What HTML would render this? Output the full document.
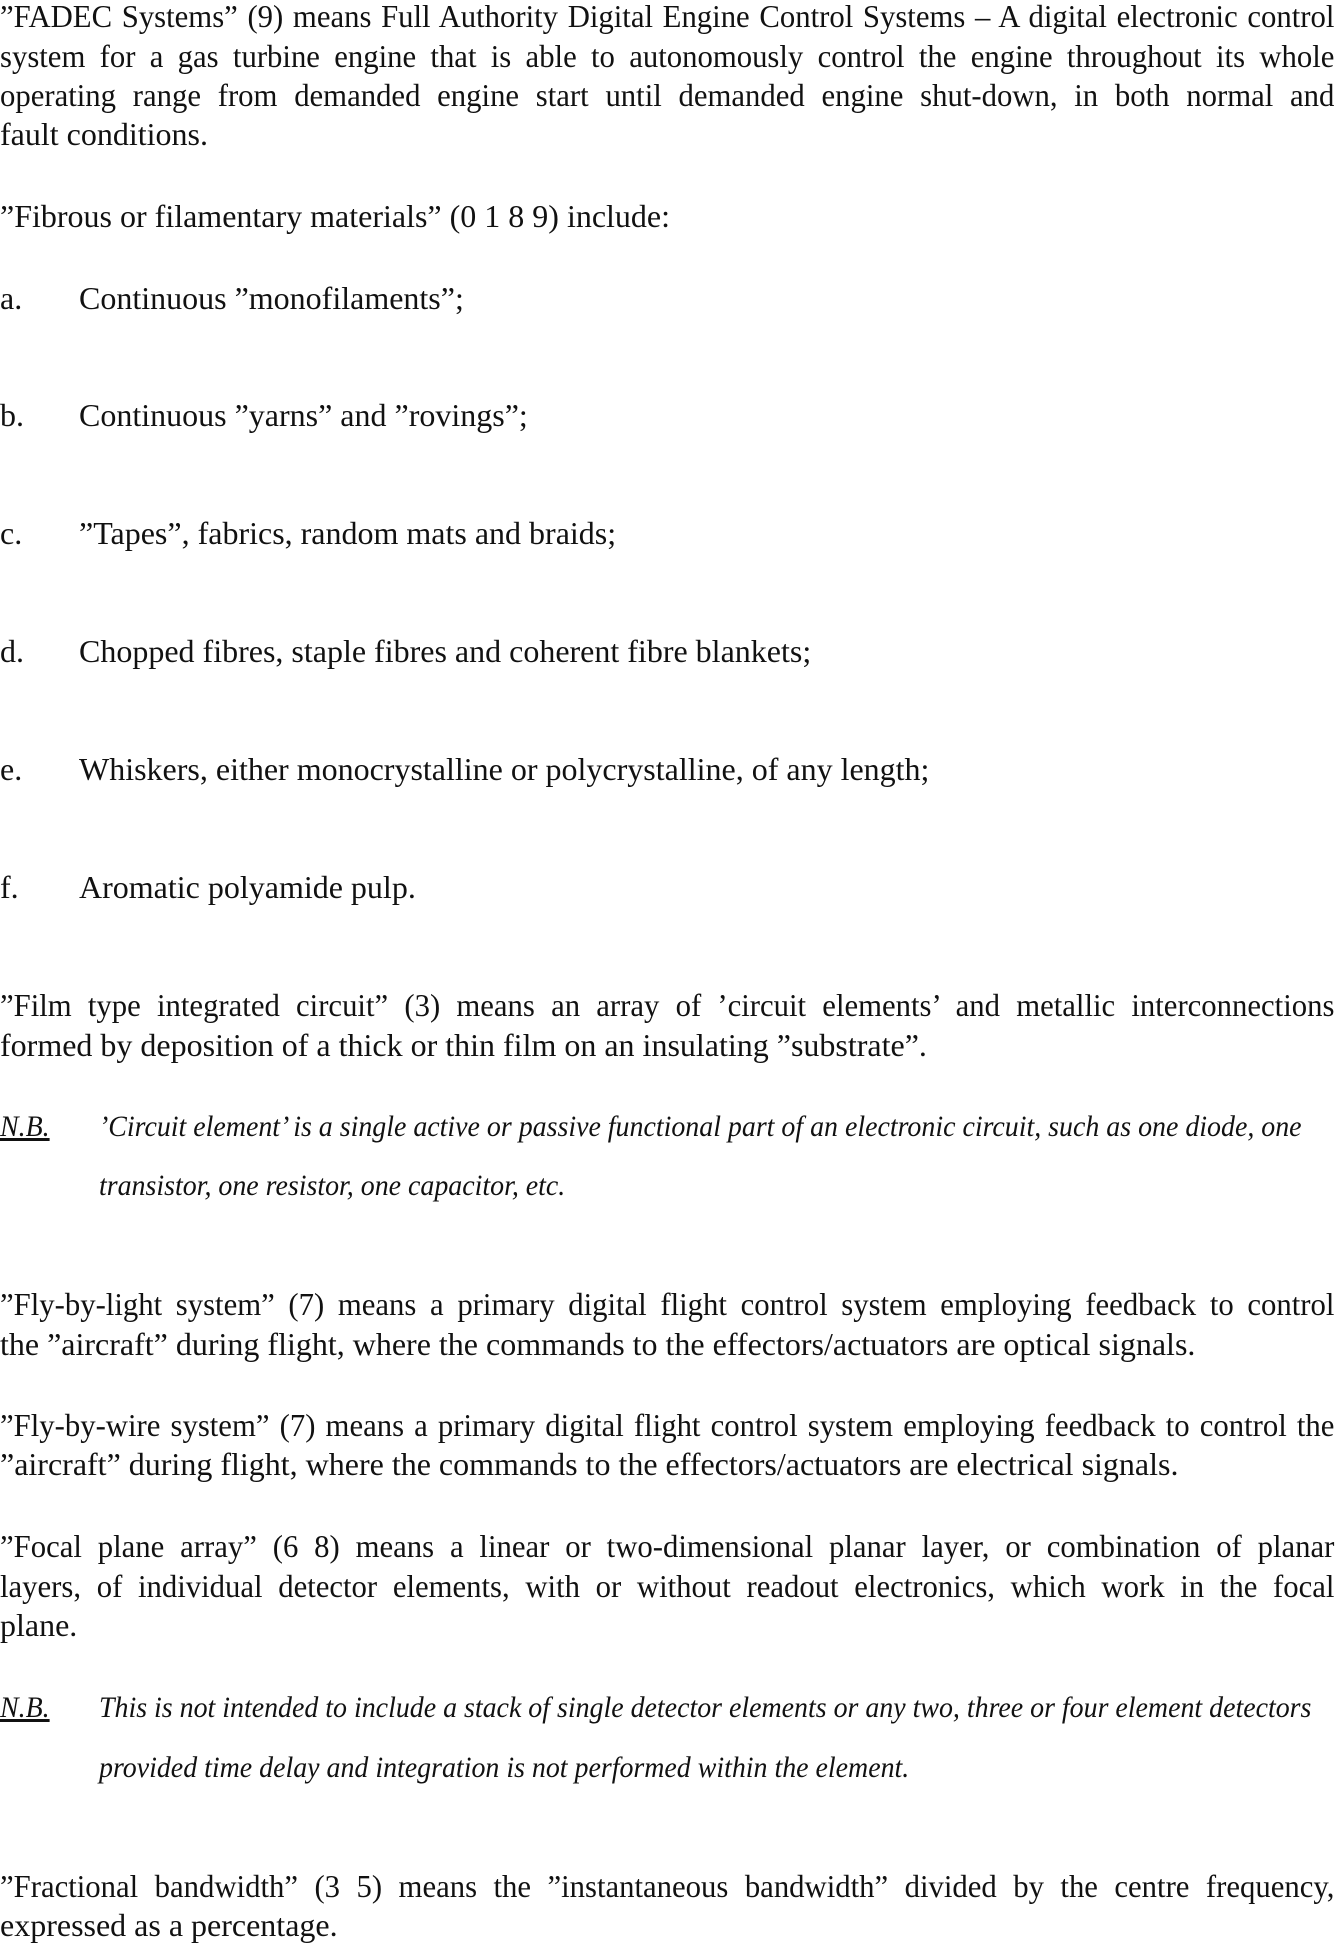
<!DOCTYPE html>
<html><head><meta charset="utf-8"><style>
html,body{margin:0;padding:0;background:#fff;}
body{width:1339px;height:1952px;position:relative;overflow:hidden;font-family:"Liberation Serif",serif;color:#111;}
.l{position:absolute;left:0;height:40px;line-height:40px;font-size:32px;white-space:nowrap;transform-origin:0 50%;transform:scaleX(1);}
.j{width:1390px;text-align:justify;text-align-last:justify;white-space:normal;transform:scaleX(0.96);}
.i{font-style:italic;font-size:30px;transform:scaleX(0.93);}
.nb{position:absolute;left:0;height:40px;line-height:40px;font-size:30px;font-style:italic;text-decoration:underline;transform-origin:0 50%;transform:scaleX(0.93);}
</style></head><body>
<div class="l j" style="top:-4px">”FADEC Systems” (9) means Full Authority Digital Engine Control Systems – A digital electronic control</div>
<div class="l j" style="top:36px">system for a gas turbine engine that is able to autonomously control the engine throughout its whole</div>
<div class="l j" style="top:75px">operating range from demanded engine start until demanded engine shut-down, in both normal and</div>
<div class="l" style="top:114px">fault conditions.</div>

<div class="l" style="top:196px">”Fibrous or filamentary materials” (0 1 8 9) include:</div>

<div class="l" style="top:278px">a.</div><div class="l" style="top:278px;left:79px">Continuous ”monofilaments”;</div>
<div class="l" style="top:395px">b.</div><div class="l" style="top:395px;left:79px">Continuous ”yarns” and ”rovings”;</div>
<div class="l" style="top:513px">c.</div><div class="l" style="top:513px;left:79px">”Tapes”, fabrics, random mats and braids;</div>
<div class="l" style="top:631px">d.</div><div class="l" style="top:631px;left:79px">Chopped fibres, staple fibres and coherent fibre blankets;</div>
<div class="l" style="top:749px">e.</div><div class="l" style="top:749px;left:79px">Whiskers, either monocrystalline or polycrystalline, of any length;</div>
<div class="l" style="top:867px">f.</div><div class="l" style="top:867px;left:79px">Aromatic polyamide pulp.</div>

<div class="l j" style="top:985px">”Film type integrated circuit” (3) means an array of ’circuit elements’ and metallic interconnections</div>
<div class="l" style="top:1025px">formed by deposition of a thick or thin film on an insulating ”substrate”.</div>

<div class="nb" style="top:1107px">N.B.</div>
<div class="l i" style="top:1107px;left:99px">’Circuit element’ is a single active or passive functional part of an electronic circuit, such as one diode, one</div>
<div class="l i" style="top:1166px;left:99px">transistor, one resistor, one capacitor, etc.</div>

<div class="l j" style="top:1284px">”Fly-by-light system” (7) means a primary digital flight control system employing feedback to control</div>
<div class="l" style="top:1324px">the ”aircraft” during flight, where the commands to the effectors/actuators are optical signals.</div>

<div class="l j" style="top:1405px">”Fly-by-wire system” (7) means a primary digital flight control system employing feedback to control the</div>
<div class="l" style="top:1444px">”aircraft” during flight, where the commands to the effectors/actuators are electrical signals.</div>

<div class="l j" style="top:1526px">”Focal plane array” (6 8) means a linear or two-dimensional planar layer, or combination of planar</div>
<div class="l j" style="top:1566px">layers, of individual detector elements, with or without readout electronics, which work in the focal</div>
<div class="l" style="top:1605px">plane.</div>

<div class="nb" style="top:1688px">N.B.</div>
<div class="l i" style="top:1688px;left:99px">This is not intended to include a stack of single detector elements or any two, three or four element detectors</div>
<div class="l i" style="top:1748px;left:99px">provided time delay and integration is not performed within the element.</div>

<div class="l j" style="top:1866px">”Fractional bandwidth” (3 5) means the ”instantaneous bandwidth” divided by the centre frequency,</div>
<div class="l" style="top:1905px">expressed as a percentage.</div>
</body></html>
